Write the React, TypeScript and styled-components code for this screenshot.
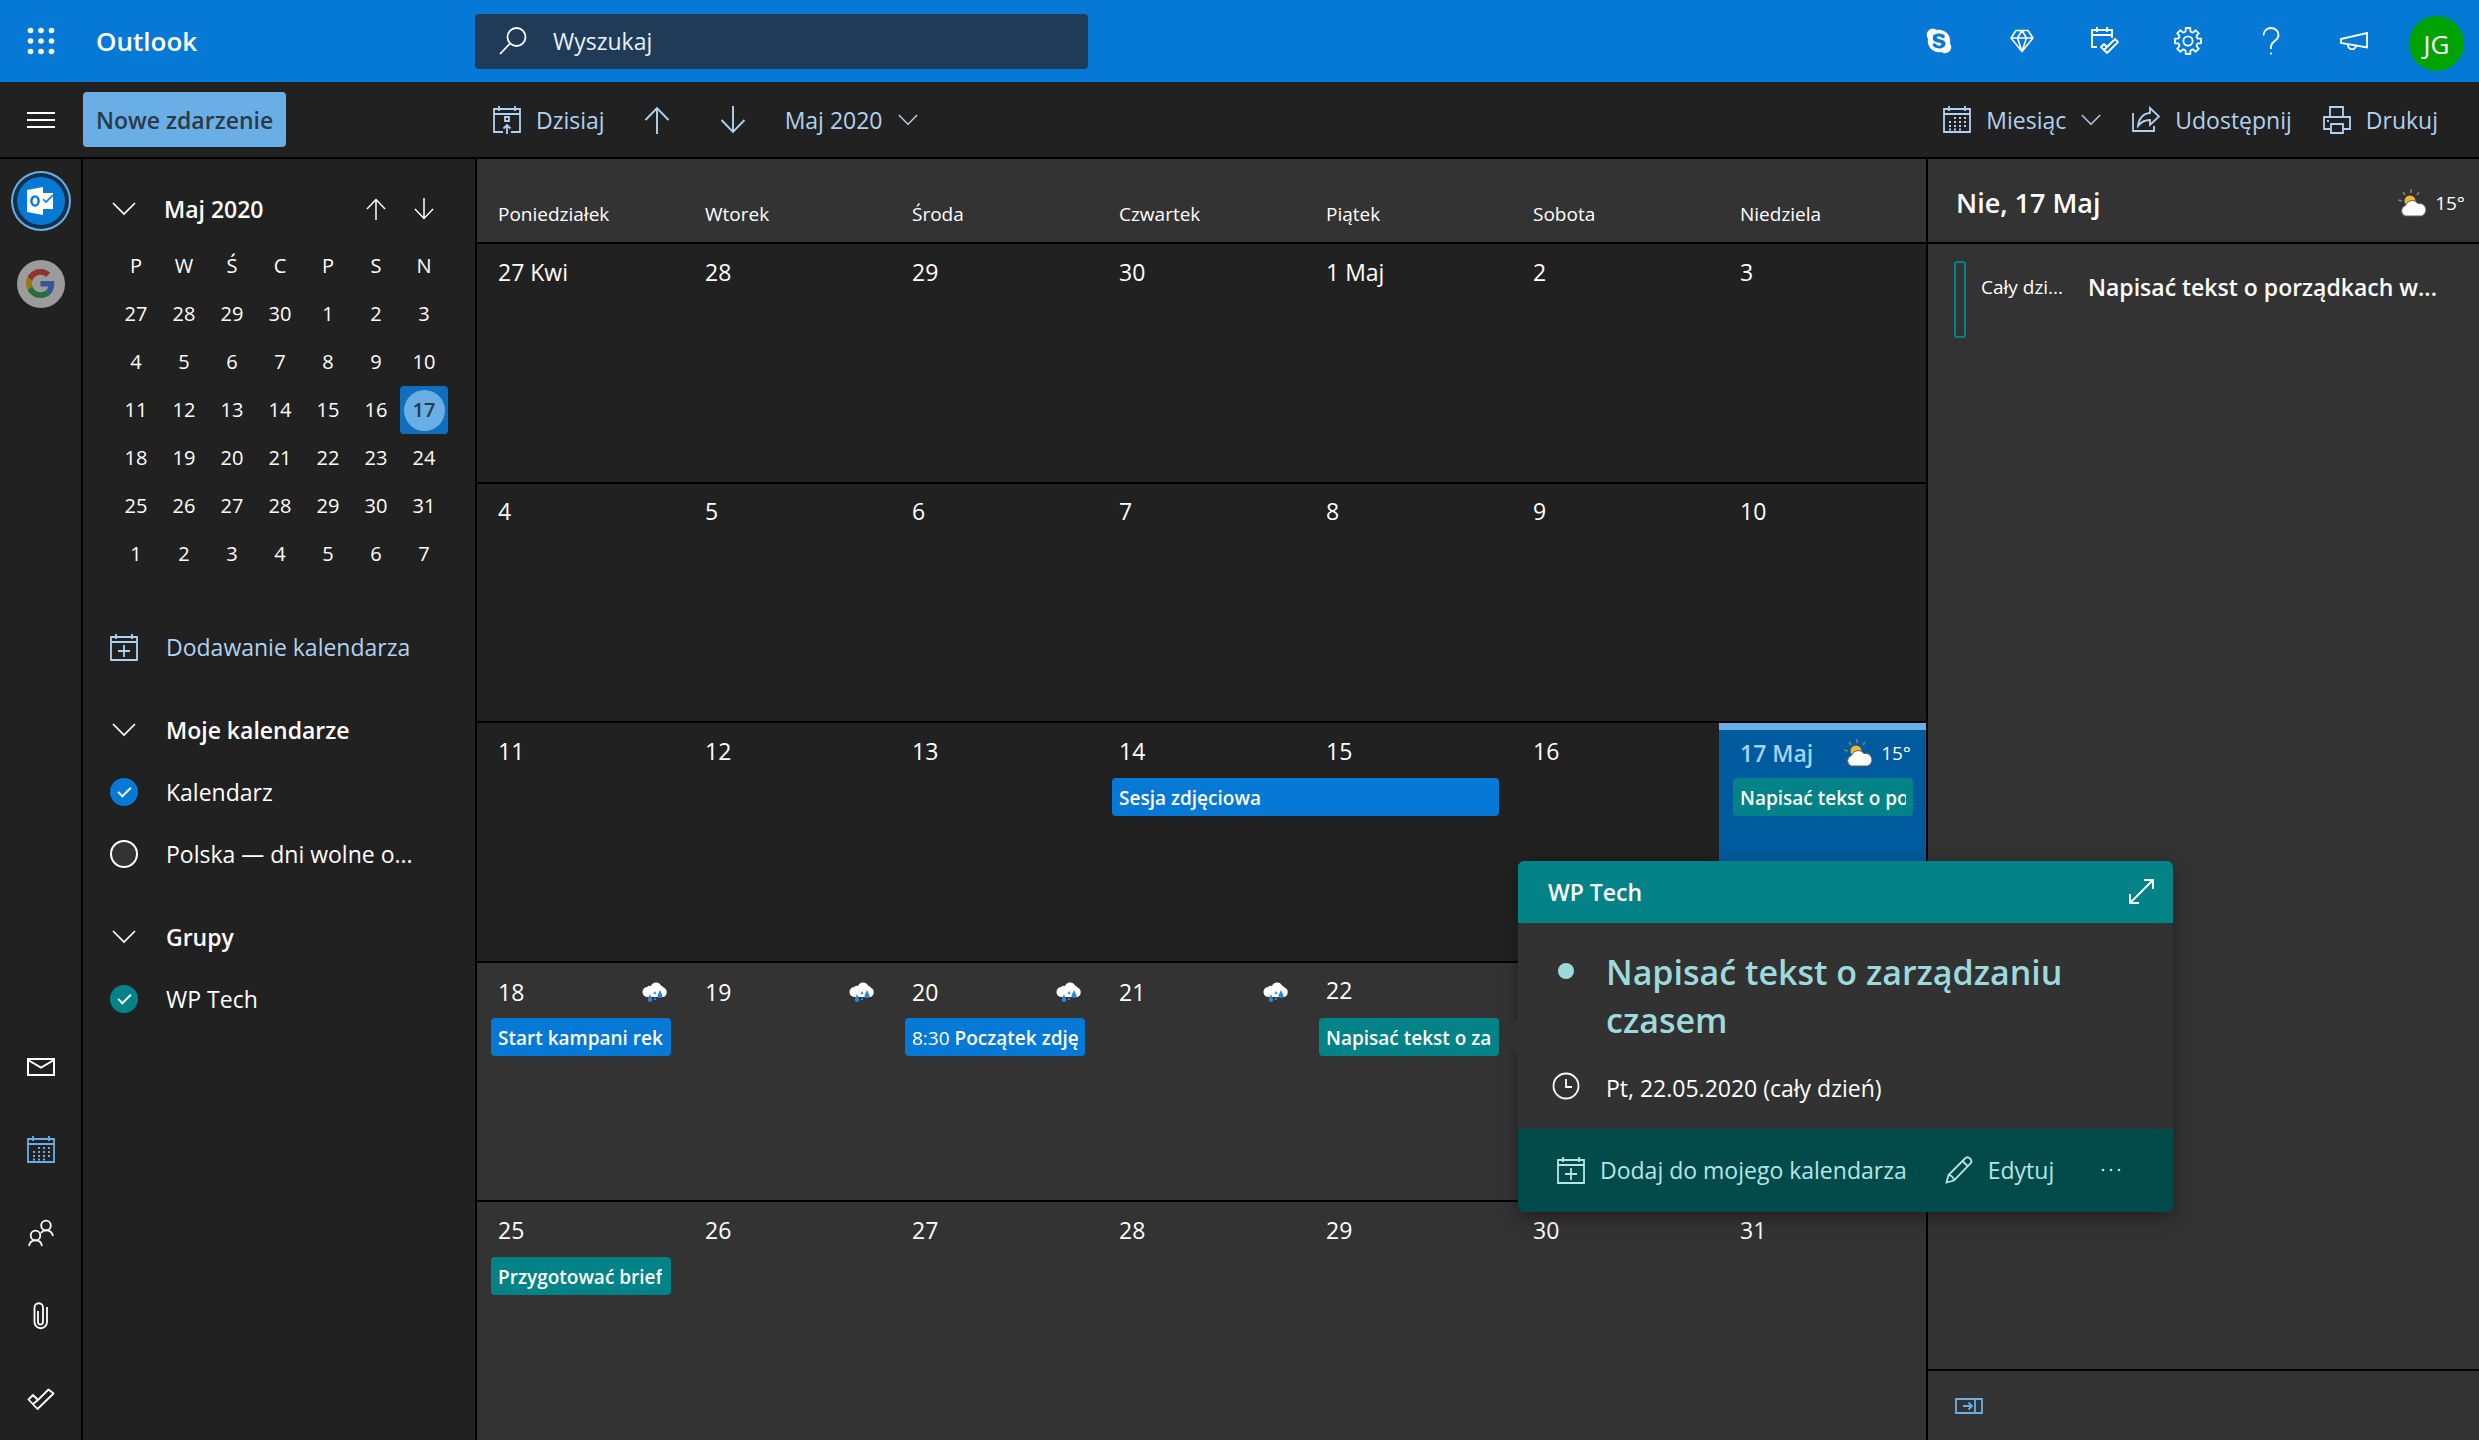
import React from 'react';
import styled, { createGlobalStyle, css } from 'styled-components';
import { FaSkype } from 'react-icons/fa';

const color = {
  brand: '#0678d6',
  accent: '#69afe5',
  link: '#b0d2f2',
  teal: '#038387',
  tealDark: '#034b4a',
  tealSoft: '#9cdadc',
  dark: '#212121',
  panel: '#333333',
  text: '#ffffff',
};

const GlobalStyle = createGlobalStyle`
  *, *::before, *::after { box-sizing: border-box; }
  body {
    margin: 0;
    background: ${color.dark};
    color: ${color.text};
    font-family: "Open Sans", "Noto Sans", sans-serif;
    font-size: 23px;
    line-height: 32px;
  }
  button, input { font: inherit; color: inherit; }
  h1, h2, h3, ul { margin: 0; padding: 0; font: inherit; }
  ul { list-style: none; }
  svg { display: block; flex: none; }
`;

/* ---------- icons ---------- */

type IconProps = { w: number; h: number; children: React.ReactNode; sw?: number };
const Icon = ({ w, h, children, sw = 2 }: IconProps) => (
  <svg width={w} height={h} viewBox={`0 0 ${w} ${h}`} fill="none" stroke="currentColor" strokeWidth={sw} aria-hidden="true">
    {children}
  </svg>
);

const Waffle = () => (
  <svg width="28" height="28" viewBox="0 0 28 28" fill="currentColor" aria-hidden="true">
    {[3.5, 14, 24.5].map(y => [3.5, 14, 24.5].map(x => <circle key={`${x}-${y}`} cx={x} cy={y} r="2.8" />))}
  </svg>
);
const Lines = () => <Icon w={28} h={18} sw={1.8}><path d="M0 2H28M0 9H28M0 16H28" /></Icon>;
const Search = () => <Icon w={28} h={28} sw={1.8}><circle cx="17.5" cy="10" r="9" /><path d="M11 16.5L1 27" /></Icon>;
const Diamond = () => (
  <Icon w={24} h={24}><path d="M6 1.5H18L23 9L12 22.5L1 9ZM1 9H23M12 1.5L7.5 9L12 22.5L16.5 9Z" strokeWidth="1.6" strokeLinejoin="round" /></Icon>
);
const CalendarCheck = () => (
  <Icon w={28} h={28} sw={1.8}>
    <path d="M6 20H1V3H21V11M1 8H21M6 0V5M16 0V5" />
    <path d="M10 20L13 17L16 20L24 12L27 15L16 26ZM13 23L16 20" strokeLinejoin="round" />
  </Icon>
);

const gearPath = (() => {
  const at = (r: number, deg: number) => {
    const a = (deg * Math.PI) / 180;
    return `${(14 + r * Math.cos(a)).toFixed(2)} ${(14 + r * Math.sin(a)).toFixed(2)}`;
  };
  let d = '';
  for (let i = 0; i < 8; i++) {
    const c = i * 45;
    d += `${i ? 'L' : 'M'}${at(10.2, c - 13)}L${at(13.2, c - 10)}L${at(13.2, c + 10)}L${at(10.2, c + 13)}Q${at(8.8, c + 22.5)} ${at(10.2, c + 32)}`;
  }
  return `${d}Z`;
})();
const Gear = () => <Icon w={28} h={28} sw={1.8}><path d={gearPath} strokeLinejoin="round" /><circle cx="14" cy="14" r="4.6" /></Icon>;
const Help = () => (
  <Icon w={18} h={28} sw={1.8}>
    <path d="M1.5 8.5C1.5 4 4.8 1 9 1S16.5 4 16.5 8.2C16.5 14 9 14 9 19.5V22" />
    <path d="M9 25.5V27.5" />
  </Icon>
);
const Megaphone = () => (
  <Icon w={28} h={18} sw={1.8}><path d="M1 7L27 1V15.5L1 11ZM8 12.5A4 4 0 0 0 16 14" /></Icon>
);
const Chevron = ({ w }: { w: number }) => (
  <svg width={w} height={w / 2 + 2} viewBox="0 0 24 14" fill="none" stroke="currentColor" strokeWidth="1.7" aria-hidden="true">
    <path d="M1 1L12 12L23 1" />
  </svg>
);
const ArrowUp = ({ s }: { s: number }) => (
  <svg width={s} height={s} viewBox="0 0 28 28" fill="none" stroke="currentColor" strokeWidth="1.9" aria-hidden="true">
    <path d="M14 28V2M2.500 14L14 2L25.500 14" />
  </svg>
);
const ArrowDown = ({ s }: { s: number }) => (
  <svg width={s} height={s} viewBox="0 0 28 28" fill="none" stroke="currentColor" strokeWidth="1.9" aria-hidden="true">
    <path d="M14 0V26M2.500 14L14 26L25.500 14" />
  </svg>
);
const CalendarToday = () => (
  <Icon w={28} h={28} sw={1.8}>
    <path d="M10 26H1V3H27V26H18M1 8H27M6 0V5M22 0V5M14 28V19M10.500 22.500L14 19L17.500 22.500M12 11H16V15H12Z" />
  </Icon>
);
const CalendarDots = () => (
  <Icon w={28} h={27} sw={1.8}>
    <path d="M1 3H27V26H1ZM1 8H27M6 0V5M22 0V5" />
    <path d="M11 12H23M6 16H23M6 20H23M6 23.500H18" strokeDasharray="2 3" />
  </Icon>
);
const CalendarAdd = () => (
  <Icon w={28} h={27} sw={1.8}><path d="M1 3H27V26H1ZM1 8H27M6 0V5M22 0V5M14 11V23M8 17H20" /></Icon>
);
const Share = () => (
  <Icon w={28} h={28} sw={1.8}>
    <path d="M1 7V25H22V20" />
    <path d="M18 7V2L27 10.500L18 19V14C13 14 9 16 6 20C6.500 13 11 7.500 18 7Z" />
  </Icon>
);
const Printer = () => (
  <Icon w={28} h={28} sw={1.8}>
    <path d="M7 11V1H20V11M7 23H1V11H27V23H20M8 18H20V27H8ZM4 15H6" />
  </Icon>
);
const Mail = () => <Icon w={28} h={20}><path d="M1 2H27V18H1ZM1 3L14 10.500L27 3" /></Icon>;
const People = () => (
  <Icon w={26} h={28} sw={1.8}>
    <circle cx="18" cy="6.500" r="4.800" /><circle cx="7.500" cy="16.500" r="4.800" />
    <path d="M13 14C14 12.500 16 11.300 18 11.300C21.500 11.300 24.200 13.500 25 17M1 27C1.500 23.500 4.200 21.300 7.500 21.300S13.500 23.500 14 27" />
  </Icon>
);
const Clip = () => (
  <Icon w={16} h={28} sw={1.8}>
    <path d="M5 9V20A2.500 2.500 0 0 0 10 20V5.500A4 4 0 0 0 1.500 5.500V20A6 6 0 0 0 14 20V5" />
  </Icon>
);
const ToDo = () => (
  <Icon w={28} h={24} sw={1.8}><path d="M1.500 12.500L6 8L11 13L21.500 2.500L26.500 6.500L10.500 22ZM6 17L11 13" strokeLinejoin="round" /></Icon>
);
const Expand = () => <Icon w={25} h={25} sw={1.8}><path d="M1 24L24 1M15 1H24V10M1 15V24H10" /></Icon>;
const Clock = () => <Icon w={28} h={28} sw={1.8}><circle cx="14" cy="14" r="12.500" /><path d="M14 7V15H20" /></Icon>;
const Pencil = () => (
  <Icon w={28} h={28} sw={1.8}>
    <path d="M1.500 26.500L3.500 19L20 2.500C21.500 1 23.500 1 25 2.500S26.800 6 25.500 7.500L9 24.500ZM17.500 5L23 10.500M3.500 19C6 19 8.500 21.500 9 24.500" />
  </Icon>
);
const Collapse = () => (
  <Icon w={28} h={16}><path d="M1 1H27V15H1ZM20 1V15M8 8H17M13.500 4.500L17 8L13.500 11.500" strokeWidth="1.800" /></Icon>
);
const Dots = () => (
  <svg width="20" height="4" viewBox="0 0 20 4" fill="currentColor" aria-hidden="true">
    <circle cx="2" cy="2" r="1.300" /><circle cx="10" cy="2" r="1.300" /><circle cx="18" cy="2" r="1.300" />
  </svg>
);
const OutlookMark = () => (
  <svg width="27" height="28" viewBox="0 0 27 28" aria-hidden="true">
    <path d="M15 6H26V22H15Z" fill="#fff" />
    <path d="M16 12L19 15L26 8" fill="none" stroke={color.brand} strokeWidth="1.600" />
    <path d="M0 3L16 0V28L0 25Z" fill="#fff" />
    <ellipse cx="8" cy="14" rx="3.600" ry="4.600" fill="none" stroke={color.brand} strokeWidth="2.400" />
  </svg>
);
const GoogleMark = () => (
  <svg width="29" height="29" viewBox="0 0 48 48" aria-hidden="true">
    <path fill="#EA4335" d="M24 9.500c3.540 0 6.710 1.220 9.210 3.600l6.850-6.850C35.900 2.380 30.470 0 24 0 14.620 0 6.510 5.380 2.560 13.220l7.980 6.190C12.430 13.720 17.740 9.500 24 9.500z" />
    <path fill="#4285F4" d="M46.980 24.550c0-1.570-.15-3.090-.38-4.550H24v9.020h12.940c-.58 2.960-2.260 5.480-4.780 7.180l7.730 6c4.510-4.180 7.090-10.360 7.090-17.650z" />
    <path fill="#FBBC05" d="M10.530 28.590c-.48-1.450-.76-2.990-.76-4.590s.27-3.140.76-4.590l-7.980-6.190C.92 16.460 0 20.120 0 24c0 3.880.92 7.540 2.560 10.780l7.970-6.190z" />
    <path fill="#34A853" d="M24 48c6.480 0 11.930-2.130 15.890-5.810l-7.730-6c-2.150 1.450-4.920 2.300-8.160 2.300-6.260 0-11.570-4.220-13.470-9.910l-7.980 6.190C6.510 42.620 14.620 48 24 48z" />
  </svg>
);
const SunCloud = () => (
  <svg width="29" height="28" viewBox="0 0 29 28" aria-hidden="true">
    <path d="M13 0V4M5 3L7 6M0 11L4 12M21 3L19 6" stroke="#7d7d7d" strokeWidth="1.600" />
    <circle cx="12" cy="12" r="5.500" fill="#f7b52b" />
    <path d="M7 27A5.600 5.600 0 0 1 7.500 16.500A7 7 0 0 1 20 14.500A6.500 6.500 0 0 1 23.500 27Z" fill="#fff" stroke="#5c5c5c" strokeWidth="1" />
  </svg>
);
const RainCloud = () => (
  <svg width="27" height="21" viewBox="0 0 27 21" aria-hidden="true">
    <path d="M6 15A5 5 0 0 1 5 5A4 4 0 0 1 9 4A5.500 5.500 0 0 1 19 3.500A4 4 0 0 1 21.500 5.500A5 5 0 0 1 21 15Z" fill="#fff" />
    <path d="M8 12L10 17A2.200 2.200 0 1 1 6 17ZM18 8L20.500 13.500A2.500 2.500 0 1 1 15.500 13.500ZM13 9L14.500 12H11.500ZM13 15L14.500 18H11.500Z" fill="#2a87d8" />
  </svg>
);

/* ---------- shared controls ---------- */

const PlainButton = styled.button`
  display: flex;
  align-items: center;
  justify-content: center;
  padding: 0;
  border: 0;
  background: none;
  cursor: pointer;
`;

const CellButton = styled(PlainButton)<{ $active?: boolean }>`
  width: 83px;
  height: 83px;
  flex: none;
  color: ${p => (p.$active ? color.accent : color.text)};
`;

const RailButton = styled(CellButton)`
  width: 81px;
`;

const LabelButton = styled(PlainButton)`
  gap: 15px;
  white-space: nowrap;
`;

/* ---------- top bar ---------- */

const Page = styled.div`
  display: flex;
  flex-direction: column;
  min-height: 100vh;
`;

const TopBar = styled.header`
  display: flex;
  align-items: center;
  height: 82px;
  background: ${color.brand};
`;

const Brand = styled.div`
  display: flex;
  align-items: center;
  flex: 0 0 475px;
`;

const BrandName = styled.h1`
  padding-left: 15px;
  font-size: 26px;
  font-weight: 600;
`;

const SearchBox = styled.label`
  display: flex;
  align-items: center;
  gap: 26px;
  flex: 0 1 613px;
  height: 55px;
  padding: 0 24px;
  border-radius: 4px;
  background: #1f3b57;
`;

const SearchInput = styled.input`
  flex: 1;
  min-width: 0;
  padding: 0;
  border: 0;
  outline: 0;
  background: none;
  &::placeholder { color: #e8f2fb; opacity: 1; }
`;

const TopActions = styled.nav`
  display: flex;
  margin-left: auto;
  padding-right: 1px;
`;

const Avatar = styled.span`
  display: grid;
  place-items: center;
  width: 55px;
  height: 55px;
  margin-top: 5px;
  border-radius: 50%;
  background: #00a300;
  font-size: 26px;
`;

/* ---------- command bar ---------- */

const CommandBar = styled.div`
  display: flex;
  align-items: center;
  height: 77px;
  border-bottom: 2px solid #000;
  color: ${color.link};
`;

const CommandStart = styled.div`
  display: flex;
  align-items: center;
  gap: 2px;
  flex: 0 0 475px;
`;

const NewEvent = styled(PlainButton)`
  height: 55px;
  padding: 0 13px;
  border-radius: 4px;
  background: ${color.accent};
  color: #2b3a46;
  font-weight: 600;
`;

const CommandGroup = styled.div<{ $gap: number }>`
  display: flex;
  align-items: center;
  gap: ${p => p.$gap}px;
`;

const NavGroup = styled(CommandGroup)`
  padding-left: 18px;
`;

const ViewGroup = styled(CommandGroup)`
  margin-left: auto;
  padding-right: 41px;
`;

/* ---------- body columns ---------- */

const Columns = styled.div`
  display: flex;
  flex: 1;
`;

const Rail = styled.nav`
  display: flex;
  flex-direction: column;
  justify-content: space-between;
  flex: 0 0 83px;
  border-right: 2px solid #000;
`;

const Account = styled.span<{ $kind: 'outlook' | 'google' }>`
  display: grid;
  place-items: center;
  width: 48px;
  height: 48px;
  border-radius: 50%;
  ${p =>
    p.$kind === 'outlook'
      ? css`
          background: ${color.brand};
          box-shadow: 0 0 0 4px #14304a, 0 0 0 6px ${color.accent};
        `
      : css`
          background: #fff;
          opacity: 0.55;
        `}
`;

const Side = styled.aside`
  flex: 0 0 394px;
  padding: 26px 27px 0;
  border-right: 2px solid #000;
`;

const MonthHead = styled.div`
  display: flex;
  align-items: center;
  height: 48px;
`;

const MonthTitle = styled.h2`
  flex: 1;
  padding-left: 26px;
  font-weight: 600;
`;

const MonthStep = styled(PlainButton)`
  width: 48px;
  height: 48px;
`;

const MonthFold = styled(PlainButton)`
  width: 28px;
  height: 48px;
`;

const MiniTable = styled.table`
  width: 336px;
  margin: 9px 0 0 2px;
  border-collapse: collapse;
  table-layout: fixed;
  font-size: 20px;
`;

const MiniCell = styled.td<{ $today?: boolean }>`
  height: 48px;
  padding: 0;
  border-radius: 4px;
  background: ${p => (p.$today ? '#106ebe' : 'transparent')};
  text-align: center;
`;

const MiniHead = styled.th`
  height: 48px;
  padding: 0;
  font-weight: 400;
`;

const MiniDay = styled(PlainButton)<{ $today?: boolean }>`
  width: 41px;
  height: 41px;
  margin: 0 auto;
  border-radius: 50%;
  ${p =>
    p.$today &&
    css`
      background: ${color.accent};
      color: #2b3a46;
      font-weight: 600;
    `}
`;

const AddCalendar = styled(PlainButton)`
  gap: 28px;
  height: 62px;
  margin-top: 38px;
  color: ${color.link};
`;

const ListSection = styled.section`
  margin-top: 21px;
`;

const FoldButton = styled(PlainButton)`
  gap: 28px;
  height: 62px;
  font-weight: 600;
`;

const FoldIcon = styled.span`
  display: grid;
  place-items: center;
  width: 28px;
`;

const CalendarRow = styled.label`
  display: flex;
  align-items: center;
  gap: 28px;
  height: 62px;
  white-space: nowrap;
`;

const RoundCheck = styled.input<{ $tint: string }>`
  display: grid;
  place-items: center;
  appearance: none;
  flex: none;
  width: 28px;
  height: 28px;
  margin: 0;
  border: 2px solid #fff;
  border-radius: 50%;
  background: ${color.panel};
  &:checked {
    border-color: ${p => p.$tint};
    background: ${p => p.$tint};
  }
  &:checked::after {
    content: '';
    width: 13px;
    height: 7px;
    margin-bottom: 4px;
    border: solid #fff;
    border-width: 0 0 2px 2px;
    transform: rotate(-45deg);
  }
`;

/* ---------- month grid ---------- */

const Month = styled.main`
  display: flex;
  flex-direction: column;
  flex: 1;
  min-width: 0;
`;

const WeekdayRow = styled.div`
  display: grid;
  grid-template-columns: repeat(7, minmax(0, 1fr));
  flex: 0 0 83px;
  padding-top: 39px;
  background: ${color.panel};
  font-size: 19px;
`;

const Weekday = styled.div`
  padding-left: 21px;
`;

const Week = styled.div<{ $lit: boolean }>`
  display: grid;
  grid-template-columns: repeat(7, minmax(0, 1fr));
  grid-template-rows: 55px 38px 1fr;
  flex: 1 0 0;
  border-top: 2px solid #000;
  background: ${p => (p.$lit ? color.panel : color.dark)};
`;

const Day = styled.div<{ $col: number; $today: boolean }>`
  grid-column: ${p => p.$col};
  grid-row: 1 / -1;
  ${p =>
    p.$today &&
    css`
      background: #005a9e;
      box-shadow: inset 0 7px ${color.accent};
      color: #a5d2f7;
      font-weight: 600;
    `}
`;

const DayHead = styled.div<{ $low: boolean }>`
  display: flex;
  align-items: center;
  justify-content: space-between;
  height: 55px;
  padding: ${p => (p.$low ? 4 : 0)}px 15px 0 21px;
`;

const Weather = styled.span`
  display: flex;
  align-items: center;
  gap: 8px;
  color: #fff;
  font-size: 19px;
  font-weight: 400;
`;

const EventSlot = styled.div<{ $col: number; $span: number }>`
  position: relative;
  grid-column: ${p => p.$col} / span ${p => p.$span};
  grid-row: 2;
  margin: 0 13px 0 14px;
`;

const EventButton = styled(PlainButton)<{ $tint: string }>`
  justify-content: flex-start;
  width: 100%;
  height: 38px;
  padding: 2px 7px 0;
  border-radius: 4px;
  background: ${p => p.$tint};
  font-size: 19px;
  font-weight: 600;
`;

const EventText = styled.span`
  overflow: hidden;
  white-space: nowrap;
`;

const EventTime = styled.span`
  font-weight: 400;
`;

/* ---------- event card ---------- */

const Card = styled.article`
  position: absolute;
  z-index: 5;
  top: -157px;
  left: calc(100% + 19px);
  width: 655px;
  border-radius: 6px;
  background: #323232;
  box-shadow: 0 6px 18px rgba(0, 0, 0, 0.35);
  &::before {
    content: '';
    position: absolute;
    top: 157px;
    left: -15px;
    border: solid transparent;
    border-width: 19px 15px 19px 0;
    border-right-color: #323232;
  }
`;

const CardHead = styled.div`
  display: flex;
  align-items: center;
  justify-content: space-between;
  height: 62px;
  padding: 0 19px 0 30px;
  border-radius: 6px 6px 0 0;
  background: ${color.teal};
  font-weight: 600;
`;

const CardBody = styled.div`
  display: grid;
  grid-template-columns: 28px minmax(0, 1fr);
  gap: 28px 26px;
  padding: 25px 30px 25px 34px;
`;

const Bullet = styled.span`
  width: 16px;
  height: 16px;
  margin: 15px auto 0;
  border-radius: 50%;
  background: ${color.tealSoft};
`;

const CardTitle = styled.h3`
  color: ${color.tealSoft};
  font-size: 34px;
  font-weight: 600;
  line-height: 48px;
`;

const CardFoot = styled.div`
  display: flex;
  align-items: center;
  gap: 38px;
  height: 83px;
  padding-left: 39px;
  border-radius: 0 0 6px 6px;
  background: ${color.tealDark};
  color: #b5e6e5;
`;

const MoreButton = styled(PlainButton)`
  width: 38px;
  height: 38px;
`;

/* ---------- agenda ---------- */

const Agenda = styled.aside`
  display: flex;
  flex-direction: column;
  flex: 0 0 553px;
  border-left: 2px solid #000;
  background: ${color.panel};
`;

const AgendaHead = styled.div`
  display: flex;
  align-items: center;
  justify-content: space-between;
  height: 83px;
  padding: 4px 14px 0 28px;
`;

const AgendaTitle = styled.h2`
  font-size: 27px;
  font-weight: 600;
`;

const AgendaList = styled.ul`
  flex: 1;
  padding: 17px 26px;
  border-top: 2px solid #000;
`;

const AgendaItem = styled.li`
  display: flex;
  gap: 15px;
`;

const AgendaMark = styled.span`
  flex: none;
  width: 12px;
  height: 77px;
  border: 2px solid ${color.teal};
  border-radius: 3px;
`;

const AgendaText = styled.div`
  display: flex;
  gap: 23px;
  padding-top: 10px;
  white-space: nowrap;
`;

const AgendaTime = styled.span`
  flex: 0 0 84px;
  font-size: 19px;
`;

const AgendaName = styled.span`
  font-weight: 600;
`;

const AgendaFoot = styled.div`
  display: flex;
  align-items: center;
  flex: 0 0 71px;
  padding-left: 27px;
  border-top: 2px solid #000;
  color: ${color.accent};
`;

/* ---------- data ---------- */

const miniWeekdays = ['P', 'W', 'Ś', 'C', 'P', 'S', 'N'];
const miniWeeks = [
  [27, 28, 29, 30, 1, 2, 3],
  [4, 5, 6, 7, 8, 9, 10],
  [11, 12, 13, 14, 15, 16, 17],
  [18, 19, 20, 21, 22, 23, 24],
  [25, 26, 27, 28, 29, 30, 31],
  [1, 2, 3, 4, 5, 6, 7],
];
const weekdays = ['Poniedziałek', 'Wtorek', 'Środa', 'Czwartek', 'Piątek', 'Sobota', 'Niedziela'];

type CalEvent = { col: number; span?: number; time?: string; title: string; tint: string; open?: boolean };
type WeekData = { days: string[]; lit?: boolean; today?: number; rain?: number[]; events?: CalEvent[] };

const weeks: WeekData[] = [
  { days: ['27 Kwi', '28', '29', '30', '1 Maj', '2', '3'] },
  { days: ['4', '5', '6', '7', '8', '9', '10'] },
  {
    days: ['11', '12', '13', '14', '15', '16', '17 Maj'],
    today: 6,
    events: [
      { col: 4, span: 2, title: 'Sesja zdjęciowa', tint: color.brand },
      { col: 7, title: 'Napisać tekst o porządkach', tint: color.teal },
    ],
  },
  {
    days: ['18', '19', '20', '21', '22', '23', '24'],
    lit: true,
    rain: [0, 1, 2, 3],
    events: [
      { col: 1, title: 'Start kampani rek', tint: color.brand },
      { col: 3, time: '8:30', title: 'Początek zdjęć', tint: color.brand },
      { col: 5, title: 'Napisać tekst o zarządzaniu', tint: color.teal, open: true },
    ],
  },
  {
    days: ['25', '26', '27', '28', '29', '30', '31'],
    lit: true,
    events: [{ col: 1, title: 'Przygotować brief', tint: color.teal }],
  },
];

/* ---------- sections ---------- */

const MiniCalendar = () => (
  <>
    <MonthHead>
      <MonthFold aria-label="Zwiń"><Chevron w={24} /></MonthFold>
      <MonthTitle>Maj 2020</MonthTitle>
      <MonthStep aria-label="Poprzedni miesiąc"><ArrowUp s={22} /></MonthStep>
      <MonthStep aria-label="Następny miesiąc"><ArrowDown s={22} /></MonthStep>
    </MonthHead>
    <MiniTable>
      <thead>
        <tr>{miniWeekdays.map((d, i) => <MiniHead key={i} scope="col">{d}</MiniHead>)}</tr>
      </thead>
      <tbody>
        {miniWeeks.map((week, r) => (
          <tr key={r}>
            {week.map((d, c) => {
              const today = r === 2 && c === 6;
              return (
                <MiniCell key={c} $today={today}>
                  <MiniDay $today={today}>{d}</MiniDay>
                </MiniCell>
              );
            })}
          </tr>
        ))}
      </tbody>
    </MiniTable>
  </>
);

const Fold = ({ children }: { children: React.ReactNode }) => (
  <FoldButton><FoldIcon><Chevron w={24} /></FoldIcon>{children}</FoldButton>
);

const CalendarToggle = ({ name, tint, on }: { name: string; tint: string; on?: boolean }) => (
  <CalendarRow>
    <RoundCheck type="checkbox" defaultChecked={on} $tint={tint} />
    {name}
  </CalendarRow>
);

const EventCard = () => (
  <Card>
    <CardHead>
      WP Tech
      <PlainButton aria-label="Rozwiń"><Expand /></PlainButton>
    </CardHead>
    <CardBody>
      <Bullet />
      <CardTitle>Napisać tekst o zarządzaniu czasem</CardTitle>
      <Clock />
      <span>Pt, 22.05.2020 (cały dzień)</span>
    </CardBody>
    <CardFoot>
      <LabelButton><CalendarAdd />Dodaj do mojego kalendarza</LabelButton>
      <LabelButton><Pencil />Edytuj</LabelButton>
      <MoreButton aria-label="Więcej"><Dots /></MoreButton>
    </CardFoot>
  </Card>
);

const MonthWeek = ({ data }: { data: WeekData }) => (
  <Week $lit={!!data.lit}>
    {data.days.map((label, i) => {
      const today = data.today === i;
      const rain = !!data.rain?.includes(i);
      return (
        <Day key={label} $col={i + 1} $today={today}>
          <DayHead $low={today || rain}>
            <span>{label}</span>
            {today && <Weather><SunCloud />15°</Weather>}
            {rain && <Weather><RainCloud /></Weather>}
          </DayHead>
        </Day>
      );
    })}
    {data.events?.map(ev => (
      <EventSlot key={ev.title} $col={ev.col} $span={ev.span ?? 1}>
        <EventButton $tint={ev.tint}>
          <EventText>{ev.time && <EventTime>{ev.time} </EventTime>}{ev.title}</EventText>
        </EventButton>
        {ev.open && <EventCard />}
      </EventSlot>
    ))}
  </Week>
);

export default function App() {
  return (
    <Page>
      <GlobalStyle />
      <TopBar>
        <Brand>
          <RailButton aria-label="Aplikacje"><Waffle /></RailButton>
          <BrandName>Outlook</BrandName>
        </Brand>
        <SearchBox>
          <Search />
          <SearchInput type="text" placeholder="Wyszukaj" aria-label="Wyszukaj" />
        </SearchBox>
        <TopActions>
          <CellButton aria-label="Skype"><FaSkype size={28} /></CellButton>
          <CellButton aria-label="Premium"><Diamond /></CellButton>
          <CellButton aria-label="Mój dzień"><CalendarCheck /></CellButton>
          <CellButton aria-label="Ustawienia"><Gear /></CellButton>
          <CellButton aria-label="Pomoc"><Help /></CellButton>
          <CellButton aria-label="Nowości"><Megaphone /></CellButton>
          <CellButton aria-label="Konto"><Avatar>JG</Avatar></CellButton>
        </TopActions>
      </TopBar>

      <CommandBar>
        <CommandStart>
          <RailButton aria-label="Menu"><Lines /></RailButton>
          <NewEvent>Nowe zdarzenie</NewEvent>
        </CommandStart>
        <NavGroup $gap={38}>
          <LabelButton><CalendarToday />Dzisiaj</LabelButton>
          <CommandGroup $gap={48}>
            <PlainButton aria-label="Wstecz"><ArrowUp s={28} /></PlainButton>
            <PlainButton aria-label="Dalej"><ArrowDown s={28} /></PlainButton>
          </CommandGroup>
          <LabelButton>Maj 2020<Chevron w={20} /></LabelButton>
        </NavGroup>
        <ViewGroup $gap={31}>
          <LabelButton><CalendarDots />Miesiąc<Chevron w={20} /></LabelButton>
          <LabelButton><Share />Udostępnij</LabelButton>
          <LabelButton><Printer />Drukuj</LabelButton>
        </ViewGroup>
      </CommandBar>

      <Columns>
        <Rail>
          <div>
            <RailButton aria-label="Konto Outlook"><Account $kind="outlook"><OutlookMark /></Account></RailButton>
            <RailButton aria-label="Konto Google"><Account $kind="google"><GoogleMark /></Account></RailButton>
          </div>
          <div>
            <RailButton aria-label="Poczta"><Mail /></RailButton>
            <RailButton aria-label="Kalendarz" $active><CalendarDots /></RailButton>
            <RailButton aria-label="Kontakty"><People /></RailButton>
            <RailButton aria-label="Pliki"><Clip /></RailButton>
            <RailButton aria-label="Zadania"><ToDo /></RailButton>
          </div>
        </Rail>

        <Side>
          <MiniCalendar />
          <AddCalendar><CalendarAdd />Dodawanie kalendarza</AddCalendar>
          <ListSection>
            <Fold>Moje kalendarze</Fold>
            <CalendarToggle name="Kalendarz" tint={color.brand} on />
            <CalendarToggle name="Polska — dni wolne o..." tint={color.brand} />
          </ListSection>
          <ListSection>
            <Fold>Grupy</Fold>
            <CalendarToggle name="WP Tech" tint={color.teal} on />
          </ListSection>
        </Side>

        <Month>
          <WeekdayRow>{weekdays.map(d => <Weekday key={d}>{d}</Weekday>)}</WeekdayRow>
          {weeks.map(w => <MonthWeek key={w.days[0]} data={w} />)}
        </Month>

        <Agenda>
          <AgendaHead>
            <AgendaTitle>Nie, 17 Maj</AgendaTitle>
            <Weather><SunCloud />15°</Weather>
          </AgendaHead>
          <AgendaList>
            <AgendaItem>
              <AgendaMark />
              <AgendaText>
                <AgendaTime>Cały dzi...</AgendaTime>
                <AgendaName>Napisać tekst o porządkach w...</AgendaName>
              </AgendaText>
            </AgendaItem>
          </AgendaList>
          <AgendaFoot>
            <PlainButton aria-label="Zwiń panel"><Collapse /></PlainButton>
          </AgendaFoot>
        </Agenda>
      </Columns>
    </Page>
  );
}
